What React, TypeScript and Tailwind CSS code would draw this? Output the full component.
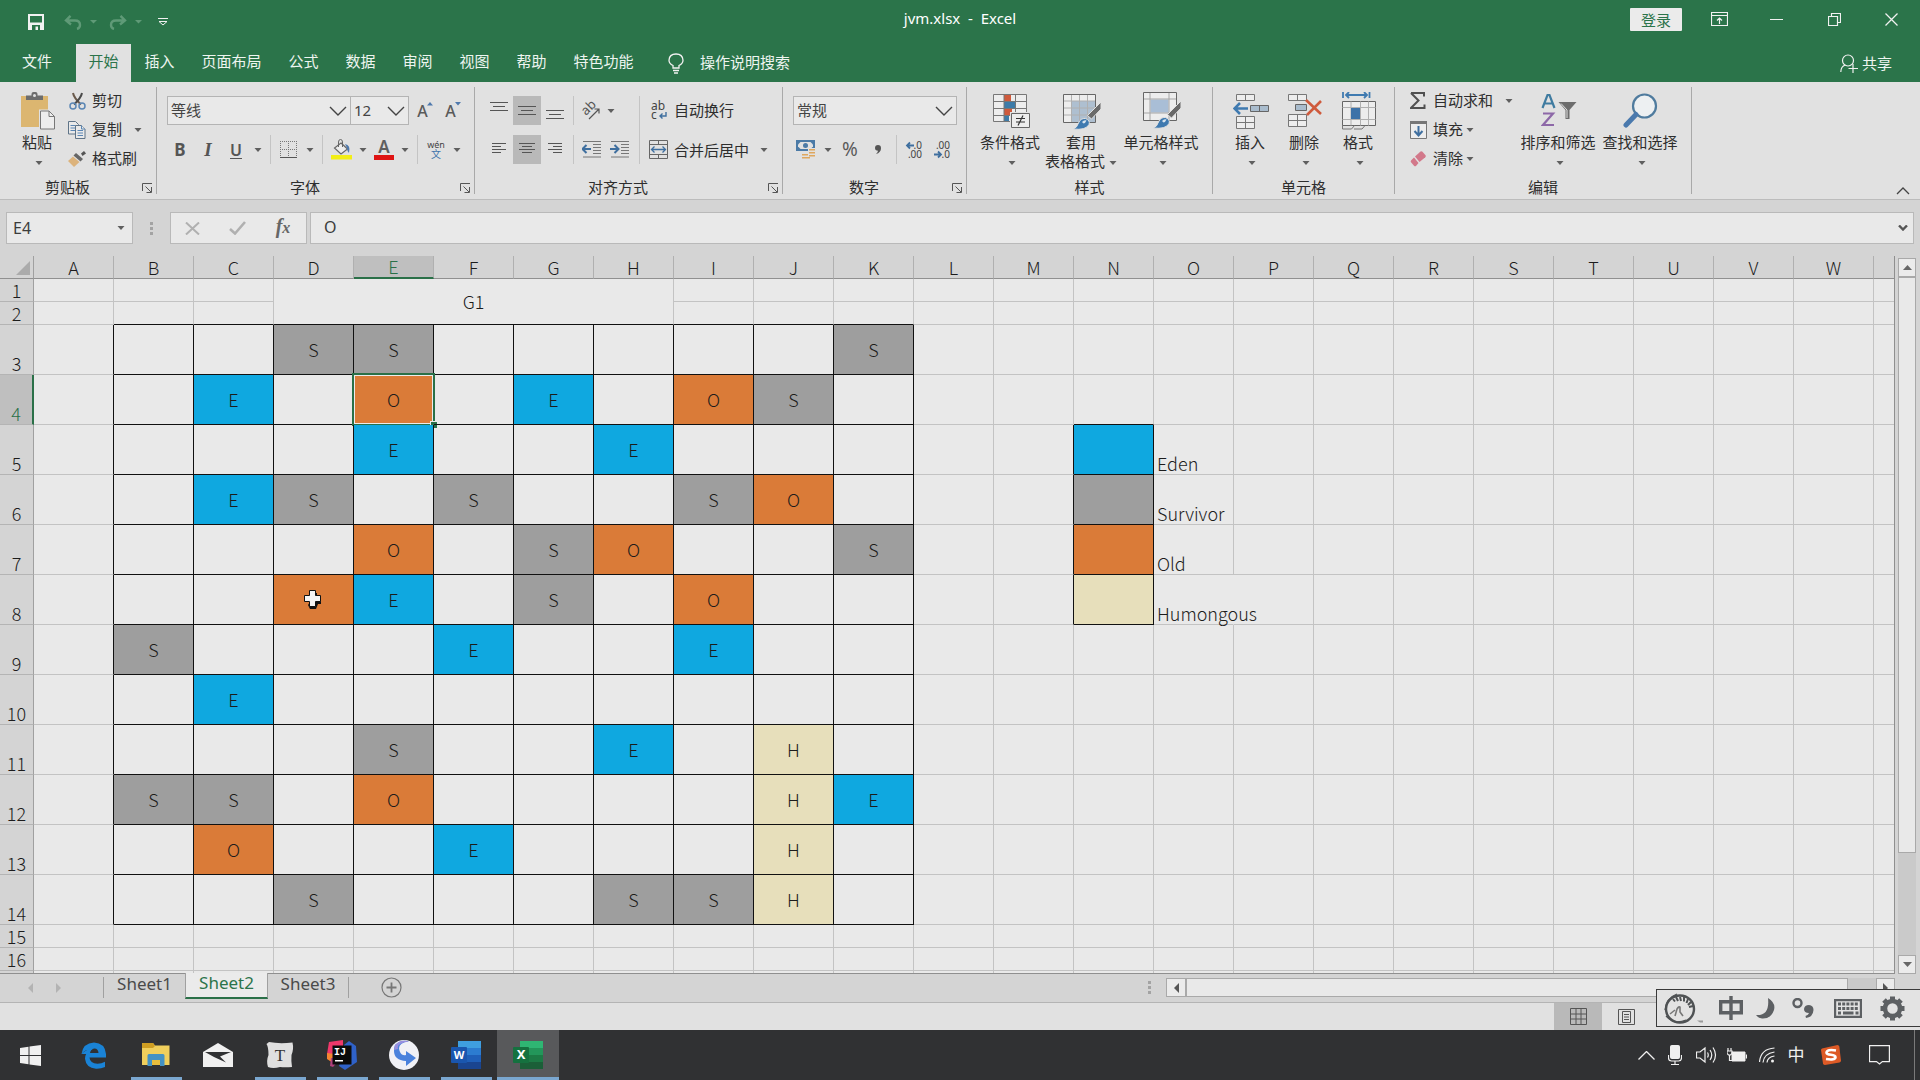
import React from "react";
import clsx from "clsx";

type Kids = { children?: React.ReactNode };

/* ---------- small shared parts ---------- */

const Caret = ({ className = "" }: { className?: string }) => (
  <svg width="8" height="4" viewBox="0 0 8 4" className={clsx("shrink-0", className)} aria-hidden="true">
    <path d="M0.5 0h7L4 4z" fill="#5f5f5f" />
  </svg>
);

const DropButton = ({ label, className }: { label: string; className: string }) => (
  <button aria-label={label} className={clsx("flex h-full items-center justify-center", className)}>
    <Caret />
  </button>
);

const Tool = ({ label, className = "w-7", children }: Kids & { label: string; className?: string }) => (
  <button aria-label={label} className={clsx("flex h-full shrink-0 items-center justify-center", className)}>
    {children}
  </button>
);

const Divider = ({ className = "w-2" }: { className?: string }) => (
  <div className={clsx("flex h-full shrink-0 justify-center", className)}>
    <div className="h-full w-px bg-[#c4c4c4]" />
  </div>
);

const BigChevron = () => (
  <svg width="18" height="10" viewBox="0 0 18 10" fill="none" className="pointer-events-none" aria-hidden="true">
    <path d="M1 1l8 8 8-8" stroke="#444" strokeWidth="1.4" />
  </svg>
);

function Combo({ label, value, className }: { label: string; value: string; className: string }) {
  return (
    <div className={clsx("grid h-[29px] items-center border border-[#b4b4b4] bg-[#e9e9e9]", className)}>
      <select aria-label={label} defaultValue={value} className="col-start-1 row-start-1 h-full w-full appearance-none bg-transparent pb-[2px] pl-[3px] text-[15px] leading-5 text-[#444] outline-none">
        <option>{value}</option>
      </select>
      <div className="pointer-events-none col-start-1 row-start-1 mr-[3px] justify-self-end">
        <BigChevron />
      </div>
    </div>
  );
}

function Group({ title, launcher, className, children }: Kids & { title: string; launcher?: boolean; className: string }) {
  return (
    <section aria-label={title} className={clsx("flex shrink-0", className)}>
      <div className="flex min-w-0 flex-1 flex-col">
        <div className="flex h-[91px]">{children}</div>
        <div className="flex h-[26px] items-center pt-[2px]">
          <h2 className="flex-1 text-center">{title}</h2>
          {launcher && (
            <button aria-label={title + "设置"} className="mt-[2px] flex w-[21px] justify-center pl-[3px]">
              <svg width="11" height="10" viewBox="0 0 11 10" fill="none" stroke="#555" aria-hidden="true">
                <path d="M0.5 8V0.5H10M3.5 3.5l5.5 5.500M9.500 4v5.500H4.500" />
              </svg>
            </button>
          )}
        </div>
      </div>
      <div className="my-[5px] w-px bg-[#a9a9a9]" />
    </section>
  );
}

function BigButton({ icon, label, second, className }: { icon: React.ReactNode; label: string; second?: string; className: string }) {
  return (
    <button className={clsx("flex shrink-0 flex-col items-center pt-[10px]", className)}>
      <span className="mb-[3px] flex h-[38px] items-center pl-[2px]">{icon}</span>
      <span className="h-[19px] whitespace-nowrap leading-[19px]">{label}</span>
      <span className="flex h-[19px] items-center gap-1 whitespace-nowrap leading-[19px]">
        {second}
        <Caret className={second ? "mt-[2px]" : "ml-1 mt-[2px]"} />
      </span>
    </button>
  );
}

function SmallButton({ icon, label, caret }: { icon: React.ReactNode; label: string; caret?: string }) {
  return (
    <button className="flex h-[29px] items-center whitespace-nowrap">
      <span className="mr-[6px] flex w-[18px] justify-center">{icon}</span>
      <span className="pb-[2px]">{label}</span>
      {caret && <Caret className={caret} />}
    </button>
  );
}

/* ---------- ribbon icons ---------- */

const PasteIcon = () => (
  <svg width="36" height="38" viewBox="0 0 36 38" aria-hidden="true">
    <path d="M1 4h27v31H1z" fill="#dcb670" />
    <path d="M6 8V3.500h5.500V2q0-2 2-2h2q2 0 2 2v1.500H23V8z" fill="#6d6d6d" />
    <circle cx="14.500" cy="3.500" r="1.500" fill="#e1e1e1" />
    <path d="M19 17.500h10.500l6 6V38H19z" fill="#e1e1e1" />
    <path d="M20.500 19h8.500l5.500 5.500v12.500h-14z" fill="#ededed" stroke="#777" />
    <path d="M29 19v5.500h5.500" fill="none" stroke="#777" />
  </svg>
);

const CutIcon = () => (
  <svg width="17" height="18" viewBox="0 0 17 18" fill="none" aria-hidden="true">
    <path d="M4 1q1 5 8 11.500" stroke="#6a5a4c" strokeWidth="2" />
    <path d="M13 1q-1 5-8 11.500" stroke="#4a4a4a" strokeWidth="2" />
    <circle cx="4" cy="14" r="3" stroke="#5a86b4" strokeWidth="1.500" />
    <circle cx="13" cy="14" r="3" stroke="#5a86b4" strokeWidth="1.500" />
  </svg>
);

const CopyIcon = () => (
  <svg width="18" height="18" viewBox="0 0 18 18" fill="#e9e9e9" stroke="#5f7488" aria-hidden="true">
    <path d="M0.500 0.500h7l3 3v9.500h-10z" />
    <path d="M2.500 4.500h5M2.500 7h5M2.500 9.500h5" stroke="#5a86b4" />
    <path d="M7.500 4.500h6l3.500 3.500v9.500H7.500z" />
    <path d="M9.500 9.500h5.500M9.500 12h5.500M9.500 14.500h5.500M13.500 4.500V8H17" stroke="#5a86b4" />
  </svg>
);

const BrushIcon = () => (
  <svg width="18" height="16" viewBox="0 0 18 16" aria-hidden="true">
    <path d="M13 2.500L16 0l2 2.500-3.500 2.500z" fill="#555" />
    <path d="M8 2l7 6-2.500 2.500L5.500 4.500z" fill="#666" />
    <path d="M5 5.500l6.500 5.500L6 16l-6-6z" fill="#dcb37c" />
  </svg>
);

const FontSizeIcon = ({ up }: { up?: boolean }) => (
  <span className="flex items-start">
    <span className="text-[16px] font-medium leading-[22px] text-[#5a5a5a]">A</span>
    <svg width="6" height="4" viewBox="0 0 6 4" className="-ml-px mt-[2px]" aria-hidden="true">
      <path d={up ? "M0 3.500L3 0l3 3.500z" : "M0 0h6L3 3.500z"} fill="#4f79ad" />
    </svg>
  </span>
);

const BorderIcon = () => (
  <svg width="17" height="17" viewBox="0 0 17 17" fill="none" stroke="#777" aria-hidden="true">
    <path d="M0.500 0v16M8.500 0v16M16.500 0v16M0 0.500h17M0 8.500h17" strokeDasharray="1 1" />
    <path d="M0 16.500h17" stroke="#555" />
  </svg>
);

const FillIcon = () => (
  <svg width="21" height="21" viewBox="0 0 21 21" fill="none" aria-hidden="true">
    <path d="M10 4l6.500 6-6.500 5L3.500 9z" fill="#ededed" stroke="#666" strokeWidth="1.200" />
    <path d="M7.500 8V3q0-2.500 2-2.500t2 2.500v5" stroke="#666" />
    <path d="M14 5q6 1 4 9-2-2-2-5z" fill="#4f79ad" />
    <path d="M0 16h21v4.500H0z" fill="#f2ee16" />
  </svg>
);

const FontColorIcon = () => (
  <span className="flex w-5 flex-col items-center">
    <span className="h-4 text-[17px] font-semibold leading-4 text-[#5f5f5f]">A</span>
    <span className="h-[5px] w-full bg-[#df1414]" />
  </span>
);

const PinyinIcon = () => (
  <span className="flex flex-col items-center">
    <span className="text-[9px] leading-[9px] text-[#444]">wén</span>
    <span className="text-[10px] leading-[11px] text-[#3f74ac]">文</span>
  </span>
);

const Lines = ({ d, h = 19 }: { d: string; h?: number }) => (
  <svg width="18" height={h} viewBox={h === 19 ? "0 0 18 19" : "0 0 18 13"} stroke="#555" fill="none" aria-hidden="true">
    <path d={d} />
  </svg>
);

const OrientationIcon = () => (
  <svg width="20" height="18" viewBox="0 0 20 18" className="overflow-visible" aria-hidden="true">
    <text x="0" y="0" transform="translate(5 14) rotate(-45)" fontSize="13" fill="#555">ab</text>
    <path d="M8 17L18 7M13.500 7H18v4.500" fill="none" stroke="#555" strokeWidth="1.200" />
  </svg>
);

const IndentIcon = ({ right }: { right?: boolean }) => (
  <svg width="19" height="17" viewBox="0 0 19 17" fill="none" aria-hidden="true">
    <path d="M1 0.500h18M11 3.500h8M11 6.500h8M11 9.500h8M11 12.500h8M1 16h18" stroke="#777" />
    <path d={right ? "M0 8h8M4.500 4l4 4-4 4" : "M9 8H1M4.500 4l-4 4 4 4"} stroke="#3f6f9f" strokeWidth="2" />
  </svg>
);

const WrapIcon = () => (
  <svg width="16" height="19" viewBox="0 0 16 19" className="overflow-visible" fill="none" aria-hidden="true">
    <text x="0" y="9" fontSize="12" fill="#444">ab</text>
    <text x="0" y="18" fontSize="12" fill="#444">c</text>
    <path d="M15 11v4H9M11.500 12.500L9 15l2.500 2.500" stroke="#3f6f9f" strokeWidth="1.400" />
  </svg>
);

const MergeIcon = () => (
  <svg width="19" height="19" viewBox="0 0 19 19" fill="none" aria-hidden="true">
    <path d="M0.500 0.500h18v18H0.500zM0.500 4.500h18M0.500 14.500h18M9.500 0.500v4M9.500 14.500v4" stroke="#666" />
    <path d="M3 9.500h13M5.500 6.500l-3 3 3 3M13.500 6.500l3 3-3 3" stroke="#3f6f9f" strokeWidth="1.300" />
  </svg>
);

const CurrencyIcon = () => (
  <svg width="20" height="19" viewBox="0 0 20 19" aria-hidden="true">
    <path d="M0 0h19v11H0z" fill="#4b7aa6" />
    <path d="M2 4.500L4.500 2h10L17 4.500v2L14.500 9h-10L2 6.500z" fill="#e1e1e1" />
    <circle cx="9.500" cy="5.500" r="2.500" fill="#4b7aa6" />
    <path d="M12 8h8v9h-6v2H5.500v-6H12z" fill="#e1e1e1" />
    <path d="M13 9h6v1.500h-6zM13 12h6v1.500h-6zM13 15h6v1.500h-6zM6 14h6v1.500H6zM6 17h8v1.500H6z" fill="#dfa75e" />
  </svg>
);

const DecimalIcon = ({ inc }: { inc?: boolean }) => (
  <svg width="16" height="18" viewBox="0 0 16 18" className="overflow-visible" fill="none" aria-hidden="true">
    <text x="16" y="8" textAnchor="end" fontSize="10" fill="#444">{inc ? ".0" : ".00"}</text>
    <text x="16" y="17" textAnchor="end" fontSize="10" fill="#444">{inc ? ".00" : ".0"}</text>
    <path d={inc ? "M8 4.500H1M4 1.500l-3 3 3 3" : "M0 13.500h7M4 10.500l3 3-3 3"} stroke="#3f6f9f" strokeWidth="1.800" />
  </svg>
);

const CondFormatIcon = () => (
  <svg width="37" height="34" viewBox="0 0 37 34" aria-hidden="true">
    <path d="M0.500 0.500h33v27h-33z" fill="#ededed" />
    <path d="M11 1h7v6h-7zM11 15h8v6h-8z" fill="#cf5a3c" />
    <path d="M11 8h11v6H11zM11 22h5v5.500h-5z" fill="#3d7ba8" />
    <path d="M0.500 0.500h33v27h-33zM0.500 7.500h33M0.500 14.500h33M0.500 21.500h33M11 0.500v27M22.500 0.500v27" fill="none" stroke="#777" />
    <path d="M17 18h20v16H17z" fill="#e1e1e1" />
    <path d="M18.500 19.500h18v14h-18z" fill="#ededed" stroke="#666" />
    <path d="M23 24.500h9M23 28h9M30 21.500l-5 10" fill="none" stroke="#333" strokeWidth="1.200" />
  </svg>
);

const PaintBrush = () => (
  <>
    <path d="M38 9v7L28.500 26l-4-3.500z" fill="#6a6a6a" stroke="#e1e1e1" strokeWidth="1" />
    <path d="M10 36q4-1 5.500-6 2-5 7-4.500 5 2 3.500 6-3 6-16 4.500z" fill="#3f7ab0" stroke="#e1e1e1" strokeWidth="1" />
    <path d="M19 29q2-2.500 4.500-1.500-1 2.500-3 3z" fill="#d8e4ee" />
  </>
);

const TableFormatIcon = () => (
  <svg width="38" height="37" viewBox="0 0 38 37" aria-hidden="true">
    <path d="M0.500 1.500h32v28h-32z" fill="#ededed" />
    <path d="M8.500 8h24v21.500h-24z" fill="#aebfd0" />
    <path d="M0.500 8h32M0.500 15h32M0.500 22h32M8.500 1.500v28M16.500 1.500v28M24.500 1.500v28" fill="none" stroke="#b0b0b0" />
    <path d="M0.500 1.500h32v28h-32z" fill="none" stroke="#666" />
    <PaintBrush />
  </svg>
);

const CellStyleIcon = () => (
  <svg width="38" height="38" viewBox="0 0 38 38" aria-hidden="true">
    <path d="M0.500 0.500h33v28h-33z" fill="#ededed" />
    <path d="M7.500 7.500h18v13h-18z" fill="#a9bed6" />
    <path d="M0.500 7h33M0.500 21h33M7 0.500v28M26 0.500v28" fill="none" stroke="#a5a5a5" />
    <path d="M0.500 0.500h33v28h-33z" fill="none" stroke="#666" />
    <PaintBrush />
  </svg>
);

const InsertIcon = () => (
  <svg width="36" height="36" viewBox="0 0 36 36" fill="none" aria-hidden="true">
    <path d="M3.500 1.500h18v6h-18zM12.500 1.500v6M3.500 23.500h18v12h-18zM3.500 29.500h18M12.500 23.500v12" fill="#ededed" stroke="#777" />
    <path d="M17.500 12.500h18v6h-18zM26.500 12.500v6" fill="#a9bccd" stroke="#666" />
    <path d="M15 15.500H2M7 10l-5.500 5.500L7 21" stroke="#3f7ab0" strokeWidth="2.600" />
  </svg>
);

const DeleteIcon = () => (
  <svg width="36" height="36" viewBox="0 0 36 36" fill="none" aria-hidden="true">
    <path d="M1.500 1.500h18v6h-18zM10.500 1.500v6M1.500 21.500h18v12h-18zM1.500 27.500h18M10.500 21.500v12" fill="#ededed" stroke="#777" />
    <path d="M8.500 11.500h11v6h-11z" fill="#a9bccd" stroke="#666" />
    <path d="M19 7l15 14M34 8L20 22" stroke="#cf5a3c" strokeWidth="2.600" />
  </svg>
);

const FormatIcon = () => (
  <svg width="35" height="38" viewBox="0 0 35 38" fill="none" aria-hidden="true">
    <path d="M0.500 9.500h33v24h-33z" fill="#ededed" stroke="#666" />
    <path d="M0.500 15.500h33M0.500 27.500h33M9 9.500v24M18.500 9.500v24M26.500 9.500v24" stroke="#b0b0b0" />
    <path d="M9 16h9v11H9z" fill="#3d72a8" />
    <path d="M0.500 33v4h9l3-3.500M12 37h8l3-3.500" stroke="#777" />
    <path d="M1 0v6M27.500 0v6M3.500 3h22M7 0L4 3l3 3M22 0l3 3-3 3" stroke="#3f7ab0" strokeWidth="1.800" />
  </svg>
);

const SigmaIcon = () => (
  <svg width="16" height="17" viewBox="0 0 16 17" aria-hidden="true">
    <path d="M1 1h13v3.500M1 1l7.500 7.500L1 16h13.500v-3.500" fill="none" stroke="#505050" strokeWidth="2" />
  </svg>
);

const FillDownIcon = () => (
  <svg width="17" height="18" viewBox="0 0 17 18" fill="none" aria-hidden="true">
    <path d="M0.500 0.500h16v17h-16z" fill="#ededed" stroke="#777" />
    <path d="M0 0h17v3H0z" fill="#777" />
    <path d="M8.500 5v9M4.500 10l4 4.500 4-4.500" stroke="#3f6f9f" strokeWidth="2" />
  </svg>
);

const EraserIcon = () => (
  <svg width="16" height="16" viewBox="0 0 16 16" aria-hidden="true">
    <path d="M10.500 0.500q1-.8 2 .2l3 3.500q.8 1-.2 2L9.500 11 5 5.500z" fill="#d2788a" />
    <path d="M4 6.500l4.500 5.500-2.500 3q-1 .8-2-.2l-3-3.500q-.8-1 .2-2z" fill="#d2788a" />
  </svg>
);

const SortFilterIcon = () => (
  <svg width="36" height="36" viewBox="0 0 36 36" aria-hidden="true">
    <path d="M1.500 15L6.500 2h2l5 13M3.500 10.500h8" fill="none" stroke="#3f7ba0" strokeWidth="2.200" />
    <path d="M2 20.500h10L2 32h11" fill="none" stroke="#8d68a8" strokeWidth="2.200" />
    <path d="M17.500 9h18l-7 8v9h-4v-9z" fill="#6d6d6d" />
    <path d="M20 10.500l6 6.500v8" fill="none" stroke="#e1e1e1" />
  </svg>
);

const FindIcon = () => (
  <svg width="36" height="36" viewBox="0 0 36 36" aria-hidden="true">
    <circle cx="21.500" cy="13" r="11.500" fill="#edf0f2" stroke="#4f7b9e" strokeWidth="2.200" />
    <path d="M13 21.500L3 32" stroke="#4a79ad" strokeWidth="5" strokeLinecap="round" />
  </svg>
);

/* ---------- title bar and tabs ---------- */

const UndoShape = ({ flip }: { flip?: boolean }) => (
  <svg width="18" height="15" viewBox="0 0 18 15" fill="none" stroke="#5f9a77" strokeWidth="2.400" className={flip ? "-scale-x-100" : ""} aria-hidden="true">
    <path d="M6.500 0.800L2 5.500l5 4M2.500 5.500H11q5 0 5 4.500 0 3-3 4" />
  </svg>
);

function TitleBar() {
  return (
    <header className="grid h-11 grid-cols-[1fr_auto_1fr] text-white">
      <div className="flex items-center pl-[22px]">
        <button aria-label="保存" className="flex w-7 justify-center">
          <svg width="16" height="16" viewBox="0 0 16 16" fill="none" aria-hidden="true">
            <path d="M0 0h16v16H0z" fill="#f1f1f1" />
            <path d="M2 2h12v6.500H2zM4 11h8v5H4z" fill="#2b744a" />
            <path d="M7.500 12.500h2.500V16H7.500z" fill="#f1f1f1" />
          </svg>
        </button>
        <button aria-label="撤消" className="ml-[14px] flex items-center gap-2">
          <UndoShape />
          <svg width="7" height="4" aria-hidden="true"><path d="M0 0h7L3.500 3.500z" fill="#5f9a77" /></svg>
        </button>
        <button aria-label="恢复" className="ml-3 flex items-center gap-2">
          <UndoShape flip />
          <svg width="7" height="4" aria-hidden="true"><path d="M0 0h7L3.500 3.500z" fill="#5f9a77" /></svg>
        </button>
        <button aria-label="自定义快速访问工具栏" className="ml-4">
          <svg width="10" height="8" viewBox="0 0 10 8" fill="none" stroke="#f1f1f1" aria-hidden="true">
            <path d="M0 0.500h10M1 3.500h8L5 7z" />
          </svg>
        </button>
      </div>
      <h1 className="whitespace-pre pt-[7px] text-[15px] leading-[22px]">{"jvm.xlsx  -  Excel"}</h1>
      <div className="flex justify-end">
        <button className="mr-[9px] mt-2 h-[23px] w-[52px] rounded-[1px] bg-[#ebebeb] text-[15px] leading-[22px] text-[#2b744a]">登录</button>
        <button aria-label="功能区显示选项" className="flex h-[38px] w-[57px] items-center justify-center">
          <svg width="17" height="14" viewBox="0 0 17 14" fill="none" stroke="#f1f1f1" aria-hidden="true">
            <path d="M0.500 0.500h16v13H0.500zM0.500 3.500h16M8.500 12V6M6 8.500L8.500 6 11 8.500" strokeWidth="1.200" />
          </svg>
        </button>
        <button aria-label="最小化" className="flex h-[38px] w-[57px] items-center justify-center">
          <span className="h-px w-[13px] bg-[#f1f1f1]" />
        </button>
        <button aria-label="还原" className="flex h-[38px] w-[58px] items-center justify-center">
          <svg width="13" height="13" viewBox="0 0 13 13" fill="none" stroke="#f1f1f1" strokeWidth="1.200" aria-hidden="true">
            <path d="M0.500 3.500h9v9h-9zM3.500 3.500v-3h9v9h-3" />
          </svg>
        </button>
        <button aria-label="关闭" className="flex h-[38px] w-[57px] items-center justify-center">
          <svg width="13" height="13" viewBox="0 0 13 13" stroke="#f1f1f1" strokeWidth="1.300" aria-hidden="true">
            <path d="M0.500 0.500l12 12M12.500 0.500l-12 12" />
          </svg>
        </button>
      </div>
    </header>
  );
}

const TABS = ["插入", "页面布局", "公式", "数据", "审阅", "视图", "帮助", "特色功能"];

function RibbonTabs() {
  return (
    <nav aria-label="功能区选项卡" className="flex h-[38px] items-stretch text-[15px] leading-5 text-[#eef5f0]">
      <button className="w-[76px] pb-1 pr-[2px]">文件</button>
      <button aria-current="page" className="w-[55px] bg-[#e1e1e1] pb-1 text-[#2b744a]">开始</button>
      {TABS.map((t) => (
        <button key={t} className={clsx("pb-1", t.length === 4 ? "w-[87px]" : "w-[57px]")}>{t}</button>
      ))}
      <button className="ml-[21px] flex items-center gap-4">
        <svg width="16" height="21" viewBox="0 0 16 21" fill="none" stroke="#f1f1f1" strokeWidth="1.300" aria-hidden="true">
          <path d="M5 15v-2.500Q1 10.500 1 7.200 1.300 1 8 1t7 6.200q0 3.300-4 5.300V15zM5 17.500h6M6 20h4" />
        </svg>
        <span className="pb-[2px]">操作说明搜索</span>
      </button>
      <button className="ml-auto mr-7 flex items-center gap-1">
        <svg width="18" height="19" viewBox="0 0 18 19" fill="none" stroke="#f1f1f1" strokeWidth="1.200" aria-hidden="true">
          <circle cx="8" cy="6.500" r="5.500" />
          <path d="M0.800 18q0-5.500 4.500-7M13 10v9M8.500 14.500H18" />
        </svg>
        共享
      </button>
    </nav>
  );
}

/* ---------- ribbon ---------- */

function Ribbon() {
  return (
    <div className="flex h-[118px] shrink-0 border-b border-[#bcbcbc] bg-[#e1e1e1] text-[15px] leading-5 text-[#2e2e2e]">
      <Group title="剪贴板" launcher className="w-[157px]">
        <BigButton icon={<PasteIcon />} label="粘贴" className="ml-3 w-[50px]" />
        <div className="ml-[6px] flex flex-col pt-1">
          <SmallButton icon={<CutIcon />} label="剪切" />
          <SmallButton icon={<CopyIcon />} label="复制" caret="ml-3" />
          <SmallButton icon={<BrushIcon />} label="格式刷" />
        </div>
      </Group>

      <Group title="字体" launcher className="w-[318px]">
        <div className="flex flex-col gap-[10px] pt-[14px]">
          <div className="flex h-[29px] pl-[10px]">
            <Combo label="字体" value="等线" className="w-[184px]" />
            <Combo label="字号" value="12" className="-ml-px w-[59px]" />
            <Tool label="增大字号" className="ml-[2px] w-7"><FontSizeIcon up /></Tool>
            <Tool label="减小字号"><FontSizeIcon /></Tool>
          </div>
          <div className="flex h-[29px] pl-[9px] text-[#555]">
            <Tool label="加粗"><b className="text-[17px]">B</b></Tool>
            <Tool label="倾斜"><i className="font-['Liberation_Serif'] text-[19px] font-bold">I</i></Tool>
            <Tool label="下划线"><span className="text-[16px] font-semibold underline underline-offset-2">U</span></Tool>
            <DropButton label="下划线样式" className="w-4" />
            <Divider />
            <Tool label="边框"><BorderIcon /></Tool>
            <DropButton label="边框样式" className="w-4" />
            <Divider />
            <Tool label="填充颜色" className="w-[30px]"><FillIcon /></Tool>
            <DropButton label="更多填充颜色" className="w-[14px]" />
            <Tool label="字体颜色"><FontColorIcon /></Tool>
            <DropButton label="更多字体颜色" className="w-[14px]" />
            <Divider className="w-[10px]" />
            <Tool label="显示拼音"><PinyinIcon /></Tool>
            <DropButton label="拼音设置" className="w-[14px]" />
          </div>
        </div>
      </Group>

      <Group title="对齐方式" launcher className="w-[308px]">
        <div className="flex w-[160px] flex-col gap-[10px] pl-[10px] pt-[14px]">
          <div className="flex h-[29px]">
            <Tool label="顶端对齐"><Lines d="M0 1.500h18M3 5.500h12M0 9.500h18" /></Tool>
            <Tool label="垂直居中" className="w-7 bg-[#b9b9b9]"><Lines d="M0 5.500h18M3 9.500h12M0 13.500h18" /></Tool>
            <Tool label="底端对齐"><Lines d="M0 9.500h18M3 13.500h12M0 17.500h18" /></Tool>
            <Divider />
            <Tool label="方向"><OrientationIcon /></Tool>
            <DropButton label="方向选项" className="w-3" />
          </div>
          <div className="flex h-[29px]">
            <Tool label="左对齐"><Lines h={13} d="M2 0.500h14M2 3.500h9M2 6.500h14M2 9.500h9" /></Tool>
            <Tool label="居中" className="w-7 bg-[#b9b9b9]"><Lines h={13} d="M1 0.500h16M4 3.500h10M1 6.500h16M4 9.500h10" /></Tool>
            <Tool label="右对齐"><Lines h={13} d="M2 0.500h14M7 3.500h9M2 6.500h14M7 9.500h9" /></Tool>
            <Divider />
            <Tool label="减少缩进量"><IndentIcon /></Tool>
            <Tool label="增加缩进量"><IndentIcon right /></Tool>
          </div>
        </div>
        <div className="ml-1 mt-[14px] h-[68px] w-px bg-[#c4c4c4]" />
        <div className="flex flex-col gap-[10px] pl-[9px] pt-[14px]">
          <button className="flex h-[29px] items-center">
            <span className="mr-[6px] flex w-[19px] justify-center"><WrapIcon /></span>
            <span className="pb-[2px]">自动换行</span>
          </button>
          <div className="flex h-[29px]">
            <button className="flex items-center">
              <span className="mr-[6px]"><MergeIcon /></span>
              <span>合并后居中</span>
            </button>
            <DropButton label="合并选项" className="ml-[5px] w-5" />
          </div>
        </div>
      </Group>

      <Group title="数字" launcher className="w-[184px]">
        <div className="flex flex-col gap-[10px] pl-[9px] pt-[14px]">
          <Combo label="数字格式" value="常规" className="ml-px w-[164px]" />
          <div className="flex h-[29px] text-[#5a5a5a]">
            <Tool label="会计数字格式"><CurrencyIcon /></Tool>
            <DropButton label="货币选项" className="w-4" />
            <Tool label="百分比样式"><span className="pb-[2px] text-[19px]">%</span></Tool>
            <Tool label="千位分隔样式">
              <svg width="6" height="9" viewBox="0 0 6 9" aria-hidden="true">
                <path d="M3 0q3 0 3 3.200Q6 7.500 1 9q2-2 2-3.300-3-.2-3-2.800Q0 0 3 0z" fill="#555" />
              </svg>
            </Tool>
            <Divider />
            <Tool label="增加小数位数"><DecimalIcon inc /></Tool>
            <Tool label="减少小数位数"><DecimalIcon /></Tool>
          </div>
        </div>
      </Group>

      <Group title="样式" className="w-[246px]">
        <BigButton icon={<CondFormatIcon />} label="条件格式" className="ml-2 w-[70px]" />
        <BigButton icon={<TableFormatIcon />} label="套用" second="表格格式" className="w-[72px]" />
        <BigButton icon={<CellStyleIcon />} label="单元格样式" className="w-[88px]" />
      </Group>

      <Group title="单元格" className="w-[182px]">
        <BigButton icon={<InsertIcon />} label="插入" className="ml-[10px] w-[54px]" />
        <BigButton icon={<DeleteIcon />} label="删除" className="w-[54px]" />
        <BigButton icon={<FormatIcon />} label="格式" className="w-[54px]" />
      </Group>

      <Group title="编辑" className="w-[297px]">
        <div className="ml-[14px] flex w-[108px] flex-col items-start pt-1">
          <SmallButton icon={<SigmaIcon />} label="自动求和" caret="ml-3" />
          <SmallButton icon={<FillDownIcon />} label="填充" caret="ml-[3px]" />
          <SmallButton icon={<EraserIcon />} label="清除" caret="ml-[3px]" />
        </div>
        <BigButton icon={<SortFilterIcon />} label="排序和筛选" className="w-[82px]" />
        <BigButton icon={<FindIcon />} label="查找和选择" className="w-[82px]" />
      </Group>

      <button aria-label="折叠功能区" className="mb-1 ml-auto mr-[10px] self-end">
        <svg width="14" height="8" viewBox="0 0 14 8" fill="none" stroke="#444" strokeWidth="1.300" aria-hidden="true">
          <path d="M1 7l6-6 6 6" />
        </svg>
      </button>
    </div>
  );
}

/* ---------- formula bar ---------- */

const Dots = () => (
  <span className="flex flex-col gap-[2px]" aria-hidden="true">
    <span className="size-[3px] bg-[#a3a3a3]" />
    <span className="size-[3px] bg-[#a3a3a3]" />
    <span className="size-[3px] bg-[#a3a3a3]" />
  </span>
);

function FormulaBar() {
  return (
    <div className="flex h-14 shrink-0 items-start pl-[6px] pr-[6px] pt-3 text-[16px] text-[#3c3c3c]">
      <div className="flex h-8 w-[127px] items-center border border-[#b9b9b9] bg-[#e9e9e9] pr-[7px]">
        <input aria-label="名称框" defaultValue="E4" className="w-full min-w-0 bg-transparent pl-[6px] outline-none" />
        <Caret />
      </div>
      <div className="flex h-8 w-[37px] items-center justify-center"><Dots /></div>
      <div className="flex h-8 w-[137px] items-center border border-[#b9b9b9] bg-[#e9e9e9]">
        <button aria-label="取消" className="flex w-[42px] justify-center">
          <svg width="15" height="13" viewBox="0 0 15 13" stroke="#b0b0b0" strokeWidth="2" aria-hidden="true"><path d="M1 0.500l13 12M14 0.500L1 12.500" /></svg>
        </button>
        <button aria-label="输入" className="flex w-12 justify-center">
          <svg width="17" height="14" viewBox="0 0 17 14" fill="none" stroke="#b0b0b0" strokeWidth="2.600" aria-hidden="true"><path d="M1 8l5 4.500L16 1" /></svg>
        </button>
        <button aria-label="插入函数" className="w-11 pb-[2px] font-['Liberation_Serif'] text-[20px] font-bold italic leading-6 text-[#666]">
          f<span className="text-[16px]">x</span>
        </button>
      </div>
      <div className="ml-[3px] flex h-8 flex-1 items-center border border-[#b9b9b9] bg-[#e9e9e9] pr-[5px]">
        <input aria-label="编辑栏" defaultValue="O" className="min-w-0 flex-1 bg-transparent pb-[2px] pl-[13px] outline-none" />
        <button aria-label="展开编辑栏">
          <svg width="10" height="6" viewBox="0 0 10 6" fill="none" stroke="#555" strokeWidth="2.400" aria-hidden="true"><path d="M1 0.500l4 4 4-4" /></svg>
        </button>
      </div>
    </div>
  );
}

/* ---------- worksheet ---------- */

const COLS = "ABCDEFGHIJKLMNOPQRSTUVW".split("");

const CELLS: Record<string, string> = {
  D3: "S", E3: "S", K3: "S",
  C4: "E", E4: "O", G4: "E", I4: "O", J4: "S",
  E5: "E", H5: "E",
  C6: "E", D6: "S", F6: "S", I6: "S", J6: "O",
  E7: "O", G7: "S", H7: "O", K7: "S",
  D8: "cursor", E8: "E", G8: "S", I8: "O",
  B9: "S", F9: "E", I9: "E",
  C10: "E",
  E11: "S", H11: "E", J11: "H",
  B12: "S", C12: "S", E12: "O", J12: "H", K12: "E",
  C13: "O", F13: "E", J13: "H",
  D14: "S", H14: "S", I14: "S", J14: "H",
};

const LEGEND: Record<number, [string, string]> = {
  5: ["E", "Eden"],
  6: ["S", "Survivor"],
  7: ["O", "Old"],
  8: ["H", "Humongous"],
};

const FILL: Record<string, string> = {
  E: "bg-[#0fa8e0]",
  S: "bg-[#9e9e9e]",
  O: "bg-[#da7b38]",
  cursor: "bg-[#da7b38]",
  H: "bg-[#e7dfbb]",
};

const CrossCursor = () => (
  <svg width="20" height="20" viewBox="0 0 20 20" className="mx-auto" aria-hidden="true">
    <path d="M6 3h7v4h4v7h-3l-2 5H6l-2-4 2-3z" fill="#111" />
    <path d="M5.500 0.500h6v5h5v6h-5v5h-6v-5h-5v-6h5z" fill="#f4f4f4" stroke="#111" />
  </svg>
);

function Cell({ col, row }: { col: string; row: number }) {
  const c = COLS.indexOf(col);
  const inRows = row >= 3 && row <= 14;
  const isLegend = col === "N" && row >= 5 && row <= 8;
  const kind = isLegend ? LEGEND[row][0] : CELLS[col + row];
  const label = col === "O" ? LEGEND[row]?.[1] : undefined;

  const darkRight = (inRows && c <= 10) || isLegend || (col === "M" && row >= 5 && row <= 8);
  const darkBottom = (c >= 1 && c <= 10 && row >= 2 && row <= 14) || (col === "N" && row >= 4 && row <= 8);

  return (
    <td
      className={clsx(
        "relative border-b border-r p-0",
        darkRight ? "border-r-[#111]" : label === "Humongous" ? "border-r-transparent" : "border-r-[#c3c3c3]",
        darkBottom ? "border-b-[#111]" : "border-b-[#c3c3c3]",
        label ? "whitespace-nowrap pl-[3px] text-left align-bottom" : "text-center align-middle",
        kind && FILL[kind],
      )}
    >
      {kind === "cursor" ? <CrossCursor /> : isLegend ? null : kind}
      {label}
      {col + row === "E4" && (
        <>
          <span className="absolute -inset-[2px] border-2 border-[#2a7048]" />
          <span className="absolute inset-0 border border-[#ececec]" />
          <span className="absolute -bottom-1 -right-1 size-[7px] border-l border-t border-[#ececec] bg-[#2a7048]" />
        </>
      )}
    </td>
  );
}

function Sheet() {
  const rows = Array.from({ length: 17 }, (_, i) => i + 1);
  return (
    <div className="flex min-h-0 flex-1">
      <div className="min-w-0 flex-1 overflow-hidden border-b border-r border-[#8f8f8f] bg-[#e9e9e9]">
        <table className="w-full table-fixed border-separate border-spacing-0 font-['Noto_Sans_CJK_SC',sans-serif] text-[18px] font-light leading-[21px] text-[#1c1c1c]">
          <colgroup>
            <col className="w-[34px]" />
            {COLS.map((c) => <col key={c} className="w-[80px]" />)}
            <col />
          </colgroup>
          <thead>
            <tr className="h-[23px] bg-[#d4d4d4]">
              <th className="border-b border-r border-[#a0a0a0] border-b-[#909090] p-0" aria-label="全选">
                <svg width="14" height="14" viewBox="0 0 14 14" className="ml-4 mt-px" aria-hidden="true"><path d="M14 0v14H0z" fill="#ababab" /></svg>
              </th>
              {COLS.map((c) => (
                <th
                  key={c}
                  scope="col"
                  className={clsx(
                    "h-[23px] border-r border-r-[#b0b0b0] p-0 font-light",
                    c === "E" ? "border-b-2 border-b-[#2a7048] bg-[#bfbfbf] text-[#2a7048]" : "border-b border-b-[#909090]",
                  )}
                >
                  {c}
                </th>
              ))}
              <th className="border-b border-[#909090] p-0" />
            </tr>
          </thead>
          <tbody>
            {rows.map((r) => (
              <tr key={r} className={r >= 3 && r <= 14 ? "h-[50px]" : "h-[23px]"}>
                <th
                  scope="row"
                  className={clsx(
                    "border-b border-b-[#b4b4b4] p-0 align-bottom font-light",
                    r === 4 ? "border-r-2 border-r-[#2a7048] bg-[#bfbfbf] text-[#2a7048]" : "border-r border-r-[#a0a0a0] bg-[#d4d4d4]",
                  )}
                >
                  {r <= 16 && r}
                </th>
                {COLS.map((c, i) => {
                  if (r <= 2 && i >= 3 && i <= 7) {
                    return r === 1 && i === 3 ? (
                      <td key={c} colSpan={5} rowSpan={2} className="border-b border-r border-b-[#111] border-r-[#c3c3c3] p-0 text-center align-middle">G1</td>
                    ) : null;
                  }
                  return <Cell key={c} col={c} row={r} />;
                })}
                <td className="border-b border-[#c3c3c3] p-0" />
              </tr>
            ))}
          </tbody>
        </table>
      </div>
      <div className="ml-[3px] mr-1 flex w-[18px] flex-col pt-[2px]" role="presentation">
        <button aria-label="向上滚动" className="flex h-[19px] items-center justify-center border border-[#a9a9a9] bg-[#ebebeb]">
          <svg width="9" height="5" aria-hidden="true"><path d="M0 5h9L4.500 0z" fill="#666" /></svg>
        </button>
        <div className="flex flex-1 flex-col bg-[#cacaca]">
          <div className="h-[85%] border border-[#a9a9a9] bg-[#e9e9e9]" />
        </div>
        <button aria-label="向下滚动" className="flex h-[19px] items-center justify-center border border-[#a9a9a9] bg-[#ebebeb]">
          <svg width="9" height="5" aria-hidden="true"><path d="M0 0h9L4.500 5z" fill="#666" /></svg>
        </button>
      </div>
    </div>
  );
}

/* ---------- sheet tabs and status bar ---------- */

function SheetBar() {
  return (
    <div className="flex h-[29px] shrink-0 items-start border-b border-[#b4b4b4] text-[17px] leading-5 text-[#4a4a4a]">
      <div className="flex h-7 w-[103px] items-center gap-[23px] pl-7">
        <button aria-label="上一个工作表"><svg width="5" height="10" className="block" aria-hidden="true"><path d="M5 0v10L0 5z" fill="#b3b3b3" /></svg></button>
        <button aria-label="下一个工作表"><svg width="5" height="10" className="block" aria-hidden="true"><path d="M0 0v10l5-5z" fill="#b3b3b3" /></svg></button>
      </div>
      <div className="mt-[3px] h-[21px] w-px bg-[#a0a0a0]" />
      <button className="h-6 w-[81px] pb-1">Sheet1</button>
      <button aria-current="page" className="-mt-px h-[26px] w-[83px] border-x border-b-2 border-x-[#a0a0a0] border-b-[#2a7048] bg-[#ebebeb] pb-1 text-[#2b744a]">Sheet2</button>
      <button className="h-6 w-[80px] pb-1">Sheet3</button>
      <div className="mt-[3px] h-[21px] w-px bg-[#a0a0a0]" />
      <button aria-label="新工作表" className="ml-8 mt-[3px]">
        <svg width="21" height="21" viewBox="0 0 21 21" fill="none" stroke="#777" aria-hidden="true">
          <circle cx="10.500" cy="10.500" r="9.500" strokeWidth="1.200" />
          <path d="M5.500 10.500h10M10.500 5.500v10" strokeWidth="1.800" />
        </svg>
      </button>
      <div className="ml-auto mr-[25px] flex w-[39%] min-w-[400px] items-start pl-[2px]">
        <div className="mt-[7px] w-[15px]"><Dots /></div>
        <div className="ml-[3px] mt-[4px] flex h-[19px] flex-1">
          <button aria-label="向左滚动" className="flex w-5 items-center justify-center border border-[#a9a9a9] bg-[#ebebeb]">
            <svg width="5" height="10" aria-hidden="true"><path d="M5 0v10L0 5z" fill="#555" /></svg>
          </button>
          <div className="flex flex-1 bg-[#cacaca]">
            <div className="w-[96%] border border-[#a9a9a9] bg-[#e9e9e9]" />
          </div>
          <button aria-label="向右滚动" className="flex w-[19px] items-center justify-center border border-[#a9a9a9] bg-[#ebebeb]">
            <svg width="5" height="10" aria-hidden="true"><path d="M0 0v10l5-5z" fill="#555" /></svg>
          </button>
        </div>
      </div>
    </div>
  );
}

function ImeBar() {
  return (
    <div className="absolute -top-[14px] right-0 flex h-[38px] w-[264px] items-center border border-r-0 border-[#3a3a3a] bg-[#e3e3e3] text-[#5d6063]">
      <button aria-label="输入法" className="ml-[6px] flex w-[42px] items-end">
        <svg width="33" height="31" viewBox="0 0 33 31" fill="none" stroke="#4f5254" aria-hidden="true">
          <ellipse cx="17" cy="16" rx="14" ry="13.500" strokeWidth="2.400" />
          <path d="M2 17Q3 5 14 1M3 23q8 9 20 4" strokeWidth="1.200" />
          <path d="M10 6l2 2.500M13 4l2 4M17 4l1 4M21 4v4.500M25 6l-1.500 4M28 9l-3 3M30 13l-4 1" strokeWidth="2" />
          <path d="M7 21l5-4M12 23l2-7q2-3 3-2v5l3 4" strokeWidth="1.600" stroke="#777" />
        </svg>
        <svg width="8" height="4" viewBox="0 0 8 4" aria-hidden="true"><path d="M1 0.500h6v2H4z" fill="#999" /></svg>
      </button>
      <button aria-label="中文" className="ml-[14px]">
        <svg width="24" height="24" viewBox="0 0 24 24" fill="none" stroke="currentColor" strokeWidth="3.400" aria-hidden="true">
          <path d="M1.700 5.700h20.600v11H1.700zM12 0v24" />
        </svg>
      </button>
      <button aria-label="半角" className="ml-[13px]">
        <svg width="20" height="21" viewBox="0 0 20 21" aria-hidden="true"><path d="M12 0q8 5 6 12-3 9-12 8.500-4-.5-6-3.500Q14 18 12 0z" fill="currentColor" /></svg>
      </button>
      <button aria-label="标点" className="ml-4">
        <svg width="22" height="20" viewBox="0 0 22 20" aria-hidden="true">
          <circle cx="5.500" cy="5" r="4" fill="none" stroke="currentColor" strokeWidth="2.400" />
          <path d="M17 7q4.500.5 4.500 5Q21 19 14 20l-.5-2q3-1 3.500-3-5 0-5-4 .5-4 5-4z" fill="currentColor" />
        </svg>
      </button>
      <button aria-label="软键盘" className="ml-[20px]">
        <svg width="28" height="19" viewBox="0 0 28 19" fill="none" aria-hidden="true">
          <path d="M1 1h26v17H1z" stroke="currentColor" strokeWidth="2.400" />
          <path d="M4 5h20M4 9.500h20" stroke="currentColor" strokeWidth="3" strokeDasharray="3 1.200" />
          <path d="M4 14h3M9 14h10.500M21.500 14h3" stroke="currentColor" strokeWidth="3" />
        </svg>
      </button>
      <button aria-label="设置" className="ml-[18px]">
        <svg width="25" height="25" viewBox="0 0 25 25" aria-hidden="true">
          <circle cx="12.500" cy="12.500" r="7.500" fill="none" stroke="currentColor" strokeWidth="4.500" />
          <path d="M12.500 0.500v4M12.500 20.500v4M0.500 12.500h4M20.500 12.500h4M4 4l3 3M18 18l3 3M4 21l3-3M18 7l3-3" stroke="currentColor" strokeWidth="5" />
        </svg>
      </button>
    </div>
  );
}

function StatusBar() {
  return (
    <div className="relative flex h-[27px] shrink-0 justify-end bg-[#e1e1e1] pr-[270px]">
      <button aria-label="普通" className="flex w-12 items-center justify-center bg-[#b9b9b9]">
        <svg width="17" height="17" viewBox="0 0 17 17" fill="none" stroke="#555" aria-hidden="true">
          <path d="M0.500 0.500h16v16h-16zM6 0.500v16M11 0.500v16M0.500 6h16M0.500 11h16" />
        </svg>
      </button>
      <button aria-label="页面布局视图" className="flex w-12 items-center justify-center">
        <svg width="17" height="16" viewBox="0 0 17 16" fill="none" stroke="#555" aria-hidden="true">
          <path d="M0.500 0.500h16v15h-16zM4.500 2.500h8v11h-8zM6 5.500h5M6 8h5M6 10.500h5" />
        </svg>
      </button>
      <ImeBar />
    </div>
  );
}

/* ---------- taskbar ---------- */

const WinLogo = () => (
  <svg width="21" height="21" viewBox="0 0 21 21" fill="#f0f0f0" aria-hidden="true">
    <path d="M0 3l8.500-1.300v8.300H0zM9.500 1.500L21 0v10H9.500zM0 11h8.500v8.300L0 18zM9.500 11H21v10L9.500 19.400z" />
  </svg>
);

const EdgeLogo = () => (
  <svg width="26" height="27" viewBox="0 0 26 27" aria-hidden="true">
    <path d="M0.500 12Q2 1 13 0.500q11 .5 12 11.500v3.500H8.500q.5 6 8 6.200 4 0 7.500-2v5.300q-4 2-9 1.800-10-.8-11-10Q4 11 9 8.500 6 10 5.500 8 2 10 .5 12zm8.500-1h8.500q-.3-4.500-4-4.500T9 11z" fill="#1a83d6" />
    <path d="M0.500 12Q2 10 5 8.500 9 6 13 6.500 8 8 8.700 12z" fill="#1a83d6" />
  </svg>
);

const ExplorerLogo = () => (
  <svg width="28" height="24" viewBox="0 0 28 24" aria-hidden="true">
    <path d="M0 1q0-1 1-1h10l2 2.500h14.500V22H0z" fill="#f0cf5c" />
    <path d="M0 1q0-1 1-1h10l2 3-2 2H0z" fill="#cf9e22" />
    <path d="M5.500 12.500q0-1.500 1.500-1.500h14q1.500 0 1.500 1.500V23h-4.500v-6h-8v6H5.500z" fill="#4492c4" />
    <path d="M10 17h8v5h-8z" fill="#e8bd3c" />
  </svg>
);

const MailLogo = () => (
  <svg width="30" height="24" viewBox="0 0 30 24" aria-hidden="true">
    <path d="M0 9L15 0l15 9v15H0z" fill="#f0f0f0" />
    <path d="M2 9h26L17 13.500l6 6L11 14z" fill="#303133" />
  </svg>
);

const TyporaLogo = () => (
  <svg width="28" height="28" viewBox="0 0 28 28" aria-hidden="true">
    <path d="M3 1q10 2 23.500 0.500Q28 8 25.500 14q-.5 6 .5 12-7 .5-12 0-7 2-12 0Q0 20 2.500 14 2.500 6 0.500 3z" fill="#dfdfdf" />
    <text x="14" y="20" textAnchor="middle" fontSize="17" fontFamily="Liberation Serif" fill="#333">T</text>
  </svg>
);

const IdeaLogo = () => (
  <svg width="30" height="30" viewBox="0 0 30 30" aria-hidden="true">
    <path d="M2 2l14-2v10L4 18 0 14z" fill="#f0386b" />
    <path d="M0 13l8 1-2 9-6-4z" fill="#f58532" />
    <path d="M17 5l5-4 7 5 1 16-12 8-6-4z" fill="#2f62c9" />
    <path d="M4 18h10l-8 9-3-1z" fill="#b0407c" />
    <path d="M5.500 5.500h19v19h-19z" fill="#0b0b0b" />
    <text x="7" y="15" fontSize="10" fontFamily="Liberation Mono" fontWeight="bold" fill="#fff">IJ</text>
    <path d="M8 20h8v1.500H8z" fill="#fff" />
  </svg>
);

const BirdLogo = () => (
  <svg width="30" height="30" viewBox="0 0 30 30" aria-hidden="true">
    <circle cx="15" cy="15" r="15" fill="#f0f1f6" />
    <path d="M6 5Q12-1 20 1.500 7 3 11 12q2 4 6 3v-4l10 7-10 8v-5Q5 20 5 11q0-3.500 1-6z" fill="#4a82dc" />
    <path d="M6 5Q12-1 20 1.500 7 3 9 9L5 10z" fill="#9a8fe0" />
  </svg>
);

const OfficeLogo = ({ word }: { word?: boolean }) => (
  <svg width="30" height="28" viewBox="0 0 30 28" aria-hidden="true">
    <path d="M7 0h23v7H7z" fill={word ? "#3f9fe0" : "#2fb673"} />
    <path d="M7 7h23v7H7z" fill={word ? "#2c7cd0" : "#23965a"} />
    <path d="M7 14h23v7H7z" fill={word ? "#1f5fb8" : "#1c7a45"} />
    <path d="M7 21h23v7H7z" fill={word ? "#1a4590" : "#1b5f38"} />
    <rect x="0" y="6" width="16" height="16" rx="1" fill={word ? "#1a56ae" : "#15713f"} />
    <text x="8" y="18" textAnchor="middle" fontSize={word ? 11 : 13} fontWeight="bold" fill="#fff">{word ? "W" : "X"}</text>
  </svg>
);

const APPS: { name: string; icon: React.ReactNode; open?: boolean; active?: boolean }[] = [
  { name: "Edge", icon: <EdgeLogo /> },
  { name: "文件资源管理器", icon: <ExplorerLogo />, open: true },
  { name: "邮件", icon: <MailLogo /> },
  { name: "Typora", icon: <TyporaLogo />, open: true },
  { name: "IntelliJ IDEA", icon: <IdeaLogo />, open: true },
  { name: "迅雷", icon: <BirdLogo />, open: true },
  { name: "Word", icon: <OfficeLogo word />, open: true },
  { name: "Excel", icon: <OfficeLogo />, open: true, active: true },
];

const TrayButton = ({ label, className, children }: Kids & { label: string; className: string }) => (
  <button aria-label={label} className={clsx("flex h-full items-center justify-center", className)}>{children}</button>
);

function Taskbar() {
  return (
    <footer className="flex h-[50px] shrink-0 bg-[#303133]">
      <button aria-label="开始菜单" className="flex w-[63px] items-center justify-center pr-[2px]"><WinLogo /></button>
      {APPS.map((a) => (
        <button key={a.name} aria-label={a.name} className={clsx("flex w-[62px] flex-col items-center", a.active && "bg-[#58595b]")}>
          <span className="flex flex-1 items-center pt-[3px]">{a.icon}</span>
          <span className={clsx("h-[3px]", a.active ? "w-full" : "w-[51px]", a.open && "bg-[#7aa7d0]")} />
        </button>
      ))}
      <div className="ml-auto flex text-[#f0f0f0]">
        <TrayButton label="显示隐藏的图标" className="w-7">
          <svg width="17" height="9" viewBox="0 0 17 9" fill="none" stroke="currentColor" strokeWidth="1.300" aria-hidden="true"><path d="M0.500 8.500l8-8 8 8" /></svg>
        </TrayButton>
        <TrayButton label="麦克风" className="w-[30px]">
          <svg width="14" height="20" viewBox="0 0 14 20" fill="none" stroke="currentColor" aria-hidden="true">
            <rect x="2.500" y="0.500" width="9" height="13" rx="1" fill="currentColor" />
            <path d="M0.500 10v3q0 3 3 3h7q3 0 3-3v-3M7 16v3M3 19.500h8" strokeWidth="1.200" />
          </svg>
        </TrayButton>
        <TrayButton label="音量" className="w-8">
          <svg width="21" height="18" viewBox="0 0 21 18" fill="none" stroke="currentColor" strokeWidth="1.200" aria-hidden="true">
            <path d="M0.500 6h3.500l5-4v14l-5-4H0.500zM11.500 6.500q1.500 2.500 0 5M14 4q3.500 5 0 10M17 1.500q5 7.500 0 15" />
          </svg>
        </TrayButton>
        <TrayButton label="电池" className="w-[29px]">
          <svg width="20" height="14" viewBox="0 0 20 14" fill="none" stroke="currentColor" aria-hidden="true">
            <path d="M5 4h13v9H5z" fill="currentColor" />
            <path d="M19.500 6.500v4M1 0v2.500M4 0v2.500M0 3h5v2.500L3.500 7h-2L0 5.500zM2.500 7v5.500H5" strokeWidth="1.200" />
          </svg>
        </TrayButton>
        <TrayButton label="网络" className="w-[31px]">
          <svg width="16" height="16" viewBox="0 0 16 16" fill="none" stroke="currentColor" strokeWidth="1.200" aria-hidden="true">
            <path d="M0.500 15Q1.500 2 15.500 1M4 15.500Q5 6.500 15.500 5M8 15.500Q8.500 10 15.500 9" />
            <circle cx="13.500" cy="14" r="1.500" fill="currentColor" stroke="none" />
          </svg>
        </TrayButton>
        <TrayButton label="输入法" className="w-[28px]">
          <span className="text-[17px] leading-5">中</span>
        </TrayButton>
        <TrayButton label="搜狗输入法" className="w-[42px]">
          <svg width="20" height="20" viewBox="0 0 20 20" aria-hidden="true">
            <path d="M1 3.500L16.500 0q1.500 0 1.800 1.500L20 15.500q0 1.500-1.500 2L4 20q-1.500 0-2-1.500L0 5q0-1 1-1.500z" fill="#dd5a26" />
            <path d="M15 5.500Q6 4 5.500 7.500q0 2 4.500 2.200 4.500.3 4.500 2.600-.5 3.200-9.500 1.700" fill="none" stroke="#fff" strokeWidth="2.600" />
          </svg>
        </TrayButton>
        <TrayButton label="操作中心" className="w-[54px]">
          <svg width="21" height="20" viewBox="0 0 21 20" fill="none" stroke="currentColor" strokeWidth="1.200" aria-hidden="true">
            <path d="M0.600 0.600h19.800v16h-7L10.500 19l-3-2.400h-7z" />
          </svg>
        </TrayButton>
        <button aria-label="显示桌面" className="ml-2 w-[6px] border-l border-[#7a7a7a]" />
      </div>
    </footer>
  );
}

export default function App() {
  return (
    <div className="flex h-screen flex-col overflow-hidden bg-[#d4d4d4] font-['Noto_Sans','Noto_Sans_CJK_SC',sans-serif]">
      <div className="shrink-0 bg-[#2b744a]">
        <TitleBar />
        <RibbonTabs />
      </div>
      <Ribbon />
      <FormulaBar />
      <Sheet />
      <SheetBar />
      <StatusBar />
      <Taskbar />
    </div>
  );
}
